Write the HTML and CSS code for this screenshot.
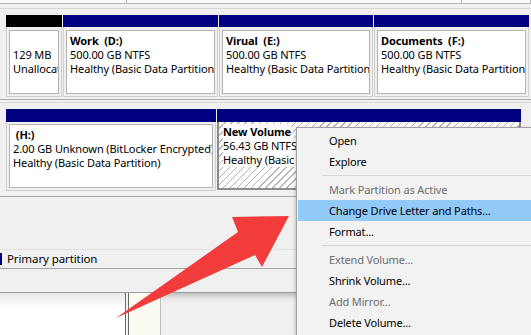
FILE: index.html
```html
<!DOCTYPE html>
<html lang="en">

<head>
  <meta charset="UTF-8">
  <meta name="viewport" content="width=device-width, initial-scale=1.0">
  <title>Disk Management</title>
  <link rel="stylesheet" href="styles.css">
</head>

<body>
  <div class="view">
    <div class="prev">
      <span class="prev-a"></span>
      <span class="prev-b"></span>
      <span class="prev-c"></span>
    </div>

    <!-- disk row 1 -->
    <section class="disk">
      <div class="part p-unalloc">
        <div class="bar black"></div>
        <div class="cell">
          <div class="box">
            <p class="name"></p>
            <p>129 MB</p>
            <p>Unallocated</p>
          </div>
        </div>
      </div>
      <div class="part p-work">
        <div class="bar"></div>
        <div class="cell">
          <div class="box">
            <p class="name">Work&nbsp; (D:)</p>
            <p>500.00 GB NTFS</p>
            <p>Healthy (Basic Data Partition)</p>
          </div>
        </div>
      </div>
      <div class="part p-virual">
        <div class="bar"></div>
        <div class="cell">
          <div class="box">
            <p class="name">Virual&nbsp; (E:)</p>
            <p>500.00 GB NTFS</p>
            <p>Healthy (Basic Data Partition)</p>
          </div>
        </div>
      </div>
      <div class="part p-docs">
        <div class="bar"></div>
        <div class="cell">
          <div class="box">
            <p class="name">Documents&nbsp; (F:)</p>
            <p>500.00 GB NTFS</p>
            <p>Healthy (Basic Data Partition)</p>
          </div>
        </div>
      </div>
    </section>

    <!-- disk row 2 -->
    <section class="disk disk2">
      <div class="part p-h">
        <div class="bar"></div>
        <div class="cell">
          <div class="box">
            <p class="name">&nbsp;(H:)</p>
            <p>2.00 GB Unknown (BitLocker Encrypted)</p>
            <p>Healthy (Basic Data Partition)</p>
          </div>
        </div>
      </div>
      <div class="part p-new selected">
        <div class="bar"></div>
        <div class="cell">
          <div class="box hatch">
            <p class="name"><span>New Volume</span></p>
            <p><span>56.43 GB NTFS</span></p>
            <p><span>Healthy (Basic Data Partition)</span></p>
          </div>
        </div>
      </div>
    </section>

    <div class="spacer"></div>
    <div class="legend"><span class="swatch"></span>Primary partition</div>
    <div class="status"></div>

    <div class="lower">
      <div class="lower-list"></div>
      <div class="lower-split"></div>
      <div class="lower-col"></div>
      <div class="lower-rest"></div>
    </div>
  </div>

  <ul class="menu">
    <li>Open</li>
    <li>Explore</li>
    <li class="sep"></li>
    <li class="off">Mark Partition as Active</li>
    <li class="hot">Change Drive Letter and Paths...</li>
    <li>Format...</li>
    <li class="sep"></li>
    <li class="off">Extend Volume...</li>
    <li>Shrink Volume...</li>
    <li class="off">Add Mirror...</li>
    <li>Delete Volume...</li>
    <li class="sep"></li>
  </ul>

  <svg class="arrow" width="531" height="335" viewBox="0 0 531 335">
    <polygon points="116,318 238,232 232,217 289,216 262,267 255,255" fill="#f23c3c" />
  </svg>
</body>

</html>
```

FILE: styles.css
```css
html,
body {
  margin: 0;
  padding: 0;
}

body {
  position: relative;
  width: 531px;
  height: 335px;
  overflow: hidden;
  background: #f0f0f0;
  font-family: "Noto Sans", "Liberation Sans", sans-serif;
  font-size: 11px;
  letter-spacing: -0.1px;
  color: #000;
}

p {
  margin: 0;
}

.view {
  width: 531px;
  height: 335px;
  overflow: hidden;
}

/* bottom edge of the disk above */
.prev {
  display: flex;
  height: 3px;
  border-bottom: 1px solid #b4b4b4;
}

.prev span {
  background: #fbfbfb;
  border-right: 1px solid #b4b4b4;
}

.prev-a {
  width: 126px;
}

.prev-b {
  width: 334px;
}

.prev-c {
  flex: 1;
}

.disk {
  display: flex;
  gap: 1px;
  margin-top: 4px;
  padding: 6px 0 2px 6px;
  border-top: 1px solid #d6d6d6;
  border-bottom: 1px solid #a9a9a9;
}

.disk2 {
  margin-top: 2px;
  padding-bottom: 5px;
}

.part {
  display: flex;
  flex-direction: column;
  flex: none;
}

.p-unalloc {
  width: 56px;
}

.p-work {
  width: 155px;
}

.p-virual {
  width: 154px;
}

.p-docs {
  width: 155px;
}

.p-h {
  width: 210px;
}

.p-new {
  width: 304px;
}

.bar {
  height: 12px;
  background: #000080;
}

.disk2 .bar {
  height: 13px;
}

.bar.black {
  background: #000;
}

.cell {
  padding: 3px 2px 2px;
  border: 1px solid #cfcfcf;
  border-top: 0;
}

.disk2 .cell {
  padding-top: 2px;
}

.box {
  height: 56px;
  padding: 3px 3px;
  border: 1px solid #b2b2b2;
  background: #fff;
  line-height: 14px;
  white-space: nowrap;
  overflow: hidden;
}

.name {
  min-height: 14px;
  font-weight: bold;
}

.selected .cell {
  padding: 0;
  border: 2px solid #8c8c8c;
  border-top: 0;
}

.hatch {
  height: 60px;
  padding: 3px 4px;
  border: 0;
  background: repeating-linear-gradient(135deg, #fff 0 4px, #b4b4b4 4px 5px);
}

.hatch span {
  background: #fff;
}

.spacer {
  height: 52px;
}

.legend {
  height: 18px;
  line-height: 18px;
  border-top: 1px solid #e2e2e2;
  border-bottom: 1px solid #a4a4a4;
  font-size: 11.5px;
}

.swatch {
  display: inline-block;
  width: 2px;
  height: 12px;
  margin-right: 5px;
  vertical-align: -2px;
  background: #000080;
}

.status {
  height: 23px;
  border-bottom: 1px solid #9c9c9c;
}

.lower {
  display: flex;
  height: 42px;
  box-shadow: inset 0 7px 7px -5px rgba(0, 0, 0, 0.28);
}

.lower-list {
  width: 125px;
  background: linear-gradient(#e6e6e6, #fff 14px);
}

.lower-split {
  width: 2px;
  border-left: 1px solid #6c6c6c;
  border-right: 1px solid #6c6c6c;
  background: #f4f4f4;
}

.lower-col {
  width: 31px;
  border-right: 1px solid #bdbdbd;
  background: #fbfbf1;
}

.lower-rest {
  flex: 1;
}

/* context menu */
.menu {
  position: absolute;
  left: 296px;
  top: 127px;
  width: 250px;
  height: 206px;
  margin: 0;
  padding: 2px 1px 0;
  overflow: hidden;
  list-style: none;
  background: #f2f2f2;
  border: 1px solid #a0a0a0;
  border-bottom: 0;
  box-shadow: -1px 1px 3px rgba(0, 0, 0, 0.2);
}

.menu li {
  height: 21px;
  line-height: 21px;
  padding-left: 31px;
  font-size: 11px;
  letter-spacing: -0.15px;
}

.menu li.off {
  color: #6d6d6d;
}

.menu li.hot {
  background: #91c9f7;
}

.menu li.sep {
  height: 1px;
  margin: 3px 0 3px 24px;
  padding: 0;
  background: #d7d7d7;
}

.arrow {
  position: absolute;
  left: 0;
  top: 0;
  pointer-events: none;
}
```
